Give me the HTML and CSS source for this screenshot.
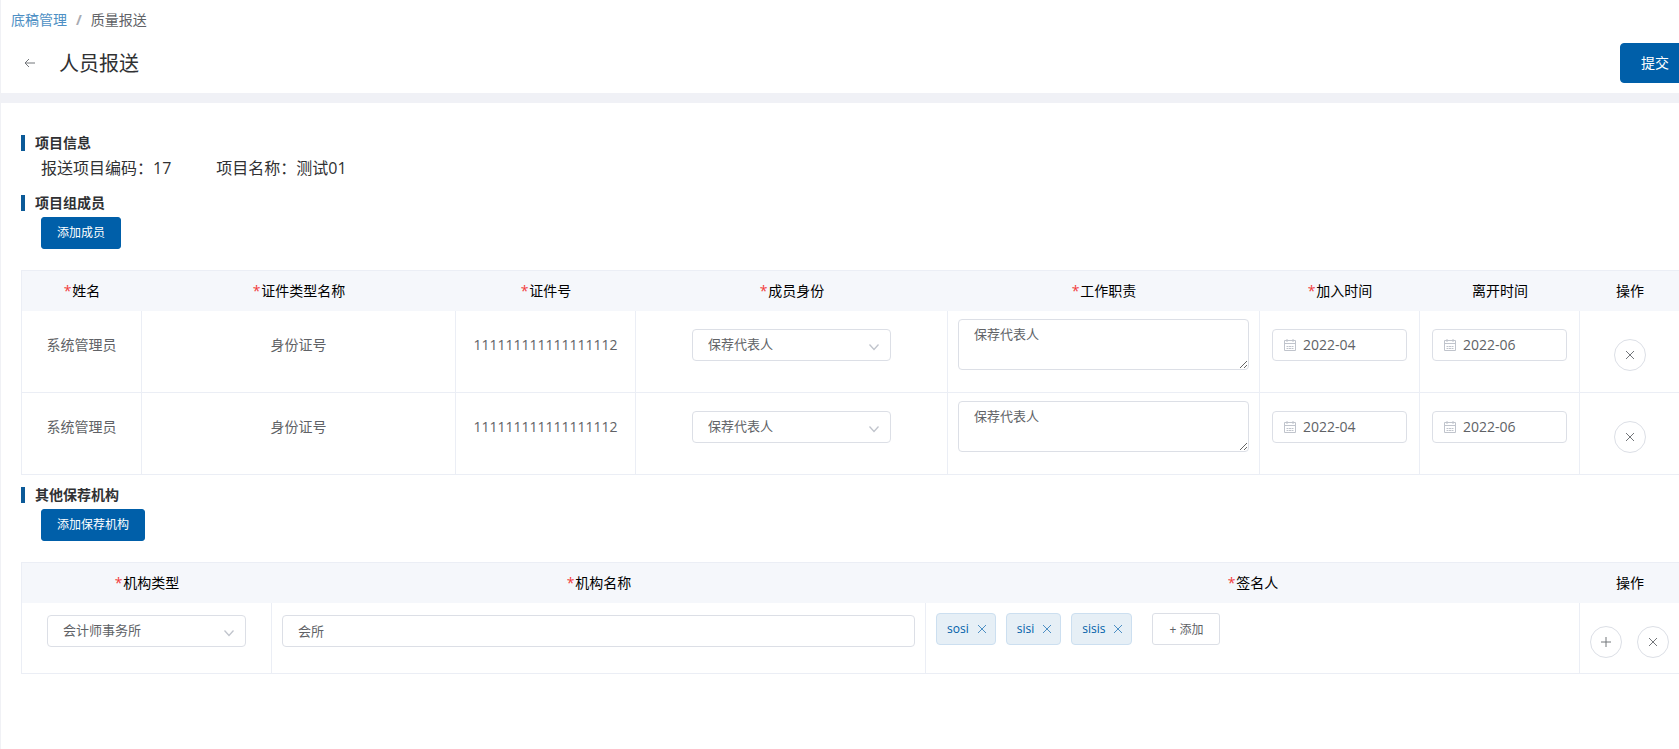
FILE: index.html
```html
<!DOCTYPE html>
<html lang="zh-CN">
<head>
<meta charset="utf-8">
<title>人员报送</title>
<link rel="stylesheet" href="styles.css">
</head>
<body>
<svg class="sprite" aria-hidden="true">
  <symbol id="i-close" viewBox="0 0 12 12"><path d="M2 2l8 8M10 2l-8 8"/></symbol>
  <symbol id="i-plus" viewBox="0 0 12 12"><path d="M6 1v10M1 6h10"/></symbol>
  <symbol id="i-down" viewBox="0 0 12 12"><path stroke-width="1.300" d="M1.500 3.500l4.500 5 4.500-5"/></symbol>
  <symbol id="i-back" viewBox="0 0 12 12"><path d="M11 6H1M5 2L1 6l4 4"/></symbol>
  <symbol id="i-date" viewBox="0 0 14 14"><path d="M1.500 2.500h11v10h-11zM1.500 5.500h11M4 1v3M10 1v3M3.500 8.500h2M6 8.500h2M8.500 8.500h2M3.500 10.500h2M6 10.500h2M8.500 10.500h2"/></symbol>
</svg>
<div class="page">
  <header class="head">
    <nav class="crumbs"><a href="#">底稿管理</a><span class="sep">/</span><span>质量报送</span></nav>
    <div class="title-row">
      <button class="back" type="button" aria-label="返回"><svg class="icon"><use href="#i-back"/></svg></button>
      <h1>人员报送</h1>
      <button class="btn btn-large" type="button">提交</button>
    </div>
  </header>
  <main class="main">
    <section>
      <h2>项目信息</h2>
      <div class="info"><span>报送项目编码：17</span><span>项目名称：测试01</span></div>
    </section>
    <section>
      <h2>项目组成员</h2>
      <button class="btn" type="button">添加成员</button>
      <table>
        <colgroup><col class="w-name"><col class="w-type"><col class="w-id"><col><col><col class="w-date"><col class="w-date"><col class="w-act"></colgroup>
        <thead>
          <tr><th><i>*</i>姓名</th><th><i>*</i>证件类型名称</th><th><i>*</i>证件号</th><th><i>*</i>成员身份</th><th><i>*</i>工作职责</th><th><i>*</i>加入时间</th><th>离开时间</th><th>操作</th></tr>
        </thead>
        <tbody>
          <tr class="member">
            <td class="text">系统管理员</td><td class="text">身份证号</td><td class="text">111111111111111112</td>
            <td><div class="select"><select aria-label="成员身份"><option>保荐代表人</option></select><svg class="icon"><use href="#i-down"/></svg></div></td>
            <td class="area"><textarea aria-label="工作职责">保荐代表人</textarea></td>
            <td><div class="date"><svg class="icon"><use href="#i-date"/></svg><input type="text" aria-label="加入时间" value="2022-04"></div></td>
            <td><div class="date"><svg class="icon"><use href="#i-date"/></svg><input type="text" aria-label="离开时间" value="2022-06"></div></td>
            <td class="act"><div class="actions"><button class="round" type="button" aria-label="删除"><svg class="icon"><use href="#i-close"/></svg></button></div></td>
          </tr>
          <tr class="member">
            <td class="text">系统管理员</td><td class="text">身份证号</td><td class="text">111111111111111112</td>
            <td><div class="select"><select aria-label="成员身份"><option>保荐代表人</option></select><svg class="icon"><use href="#i-down"/></svg></div></td>
            <td class="area"><textarea aria-label="工作职责">保荐代表人</textarea></td>
            <td><div class="date"><svg class="icon"><use href="#i-date"/></svg><input type="text" aria-label="加入时间" value="2022-04"></div></td>
            <td><div class="date"><svg class="icon"><use href="#i-date"/></svg><input type="text" aria-label="离开时间" value="2022-06"></div></td>
            <td class="act"><div class="actions"><button class="round" type="button" aria-label="删除"><svg class="icon"><use href="#i-close"/></svg></button></div></td>
          </tr>
        </tbody>
      </table>
    </section>
    <section>
      <h2>其他保荐机构</h2>
      <button class="btn" type="button">添加保荐机构</button>
      <table>
        <colgroup><col class="w-org"><col><col><col class="w-act"></colgroup>
        <thead>
          <tr><th><i>*</i>机构类型</th><th><i>*</i>机构名称</th><th><i>*</i>签名人</th><th>操作</th></tr>
        </thead>
        <tbody>
          <tr class="org">
            <td><div class="select"><select aria-label="机构类型"><option>会计师事务所</option></select><svg class="icon"><use href="#i-down"/></svg></div></td>
            <td><input class="field" type="text" aria-label="机构名称" value="会所"></td>
            <td class="signers"><div class="tags">
              <span class="tag">sosi<button type="button" aria-label="移除 sosi"><svg class="icon"><use href="#i-close"/></svg></button></span>
              <span class="tag">sisi<button type="button" aria-label="移除 sisi"><svg class="icon"><use href="#i-close"/></svg></button></span>
              <span class="tag">sisis<button type="button" aria-label="移除 sisis"><svg class="icon"><use href="#i-close"/></svg></button></span>
              <button class="add" type="button">+ 添加</button>
            </div></td>
            <td class="act"><div class="actions"><button class="round" type="button" aria-label="增加"><svg class="icon"><use href="#i-plus"/></svg></button><button class="round" type="button" aria-label="删除"><svg class="icon"><use href="#i-close"/></svg></button></div></td>
          </tr>
        </tbody>
      </table>
    </section>
  </main>
</div>
</body>
</html>
```
FILE: styles.css
```css
* { box-sizing: border-box; }
body { margin: 0; background: #fff; overflow-x: hidden; }
body, button, input, select, textarea {
  font-family: "Open Sans", "Noto Sans CJK SC", sans-serif;
}
button { padding: 0; cursor: pointer; }
.sprite { display: none; }
.icon { width: 12px; height: 12px; fill: none; stroke: currentColor; flex: none; display: block; }

.page { min-height: 100vh; border-left: 1px solid #f0f1f5; color: #303133; overflow: hidden; }

.head { height: 103px; padding-left: 10px; border-bottom: 10px solid #f0f1f6; margin-right: -11px; }
.crumbs { display: flex; gap: 9px; padding-top: 10px; font-size: 14px; line-height: 20px; color: #606266; }
.crumbs a { color: #4d8fc4; text-decoration: none; }
.crumbs .sep { color: #a8abb2; font-weight: 700; }
.title-row { display: flex; align-items: center; padding: 13px 0 0 13px; }
.back { display: flex; border: 0; background: none; color: #73767a; }
h1 { flex: 1; margin: 0 0 0 23px; padding-top: 2px; font-size: 20px; line-height: 30px; font-weight: 400; }

.btn {
  height: 32px; padding: 0 15px; border: 1px solid #005fa9; border-radius: 3px;
  background: #005fa9; color: #fff; font-size: 12px; line-height: 30px;
}
.btn-large { height: 40px; padding: 0 20px; border-radius: 4px; font-size: 14px; }

.main { padding: 32px 0 0 20px; }
h2 {
  margin: 0; padding-left: 10px; border-left: 4px solid #0c5a98;
  font-size: 14px; line-height: 16px; font-weight: 700;
}
.info { display: flex; gap: 45px; padding: 5px 0 15px 20px; font-size: 16px; line-height: 24px; }
section > .btn { display: block; margin: 6px 0 21px 20px; }

table {
  width: calc(100% + 1px); margin-bottom: 12px; table-layout: fixed;
  border-collapse: separate; border-spacing: 0;
  border-top: 1px solid #ebeef5; border-left: 1px solid #ebeef5;
  font-size: 14px; line-height: 32px;
}
.w-name { width: 120px; }
.w-type { width: 314px; }
.w-id { width: 180px; }
.w-date { width: 160px; }
.w-act { width: 100px; }
.w-org { width: 250px; }
th { height: 40px; padding: 0; background: #f5f7fb; color: #000; font-weight: 400; text-align: center; }
th i { margin-right: 1px; color: #f23c3c; font-style: normal; }
td { padding: 18px 10px 0; border-right: 1px solid #ebeef5; border-bottom: 1px solid #ebeef5; vertical-align: top; }
.member td { height: 82px; }
.org td { height: 71px; padding-top: 12px; }
.text { text-align: center; color: #606266; }
.member .area { padding-top: 8px; }
.member .act { padding-top: 28px; }
.org .act { padding-top: 23px; }
.org .signers { padding-top: 10px; }

.select { display: grid; align-items: center; width: 199px; margin: 0 auto; color: #c0c4cc; }
.select > * { grid-area: 1 / 1; }
.select .icon { justify-self: end; margin: 3px 11px 0 0; pointer-events: none; }
select, textarea, .field {
  width: 100%; height: 32px; padding: 0 15px; border: 1px solid #dcdfe6; border-radius: 4px;
  background: #fff; color: #606266; font-size: 13px; line-height: 20px; appearance: none;
}
.field, select { padding-bottom: 2px; }
textarea { display: block; height: 51px; padding: 4px 15px; resize: vertical; }
.field { display: block; }
.date {
  display: flex; align-items: center; gap: 6px; width: 135px; height: 32px; margin: 0 auto;
  padding-left: 10px; border: 1px solid #dcdfe6; border-radius: 4px; color: #c0c4cc;
}
.date .icon { width: 14px; height: 14px; }
.date input { width: 100%; min-width: 0; padding: 0 0 2px; border: 0; background: none; color: #606266; font-size: 14px; }

.actions { display: flex; justify-content: center; gap: 15px; }
.round {
  display: flex; align-items: center; justify-content: center; flex: none; width: 32px; height: 32px;
  border: 1px solid #dcdfe6; border-radius: 50%; background: #fff; color: #73767a;
}
.tags { display: flex; gap: 10px; font-size: 12px; }
.tag {
  display: flex; align-items: center; gap: 7px; height: 32px; padding: 0 7px 0 10px;
  border: 1px solid #ccdff0; border-radius: 4px; background: #e6eff6; color: #005fa9;
}
.tag button { border: 0; background: none; color: #4d8fc4; }
.add {
  height: 32px; margin-left: 10px; padding: 0 16px; border: 1px solid #dcdfe6; border-radius: 3px;
  background: #fff; color: #606266; font-size: 12px;
}
```
